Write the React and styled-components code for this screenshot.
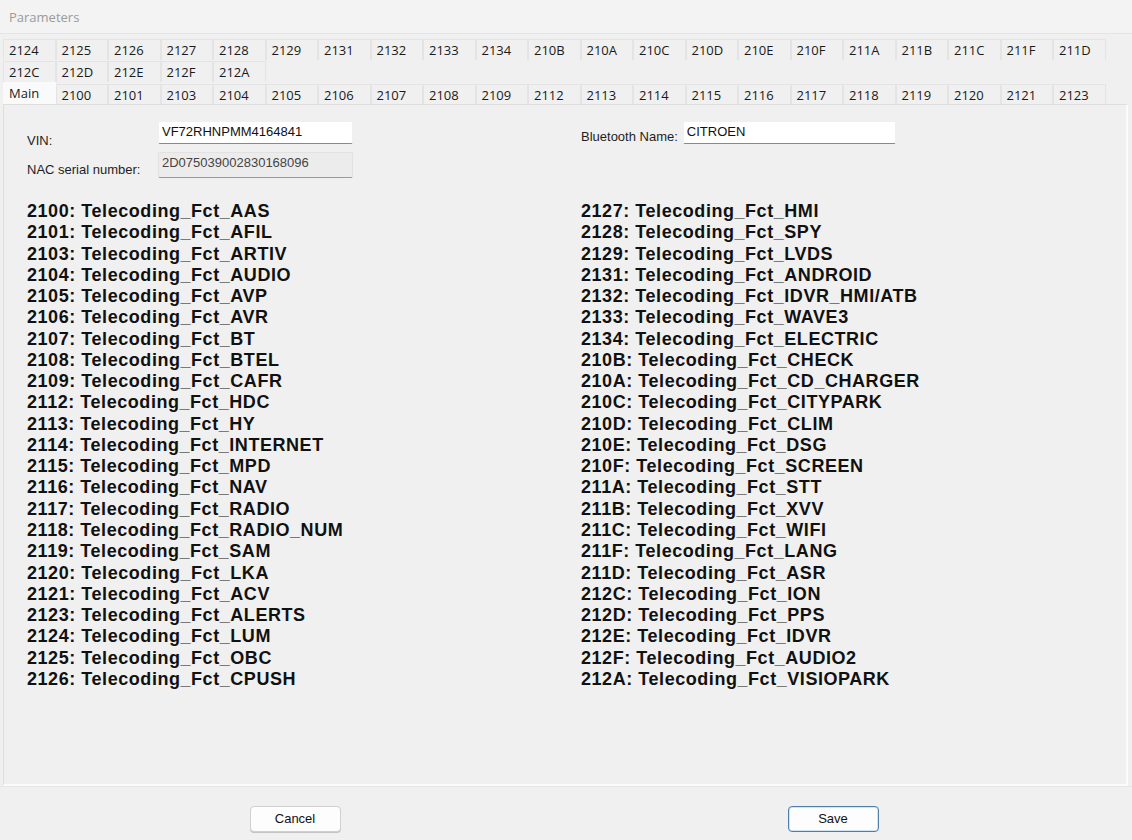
import React from "react";
import styled, { createGlobalStyle } from "styled-components";

const topRow = ["2124", "2125", "2126", "2127", "2128", "2129", "2131", "2132", "2133", "2134", "210B", "210A", "210C", "210D", "210E", "210F", "211A", "211B", "211C", "211F", "211D"];
const midRow = ["212C", "212D", "212E", "212F", "212A"];
const bottomRow = ["Main", "2100", "2101", "2103", "2104", "2105", "2106", "2107", "2108", "2109", "2112", "2113", "2114", "2115", "2116", "2117", "2118", "2119", "2120", "2121", "2123"];

const leftList = [
  ["2100", "AAS"], ["2101", "AFIL"], ["2103", "ARTIV"], ["2104", "AUDIO"], ["2105", "AVP"],
  ["2106", "AVR"], ["2107", "BT"], ["2108", "BTEL"], ["2109", "CAFR"], ["2112", "HDC"],
  ["2113", "HY"], ["2114", "INTERNET"], ["2115", "MPD"], ["2116", "NAV"], ["2117", "RADIO"],
  ["2118", "RADIO_NUM"], ["2119", "SAM"], ["2120", "LKA"], ["2121", "ACV"], ["2123", "ALERTS"],
  ["2124", "LUM"], ["2125", "OBC"], ["2126", "CPUSH"],
];

const rightList = [
  ["2127", "HMI"], ["2128", "SPY"], ["2129", "LVDS"], ["2131", "ANDROID"], ["2132", "IDVR_HMI/ATB"],
  ["2133", "WAVE3"], ["2134", "ELECTRIC"], ["210B", "CHECK"], ["210A", "CD_CHARGER"], ["210C", "CITYPARK"],
  ["210D", "CLIM"], ["210E", "DSG"], ["210F", "SCREEN"], ["211A", "STT"], ["211B", "XVV"],
  ["211C", "WIFI"], ["211F", "LANG"], ["211D", "ASR"], ["212C", "ION"], ["212D", "PPS"],
  ["212E", "IDVR"], ["212F", "AUDIO2"], ["212A", "VISIOPARK"],
];

export default function App() {
  return (
    <>
      <GlobalStyle />
      <Window>
        <TitleBar>Parameters</TitleBar>
        <TabControl>
          <TabRow>
            {topRow.map((t) => (
              <Tab key={t}>{t}</Tab>
            ))}
          </TabRow>
          <TabRow>
            {midRow.map((t) => (
              <Tab key={t}>{t}</Tab>
            ))}
          </TabRow>
          <TabRow $front>
            {bottomRow.map((t) => (
              <Tab key={t} $active={t === "Main"}>
                {t}
              </Tab>
            ))}
          </TabRow>
          <Panel>
            <Columns>
              <Column>
                <Field>
                  <Label $shift={-5}>VIN:</Label>
                  <Input value="VF72RHNPMM4164841" readOnly />
                </Field>
                <Field>
                  <Label $shift={0}>NAC serial number:</Label>
                  <Input $disabled value="2D075039002830168096" readOnly />
                </Field>
              </Column>
              <Column>
                <Field>
                  <Label $inline $shift={-1}>Bluetooth Name:</Label>
                  <Input $wide value="CITROEN" readOnly />
                </Field>
              </Column>
            </Columns>
            <Columns>
              <List>
                {leftList.map(([code, name]) => (
                  <Item key={code}>
                    {code}: Telecoding_Fct_{name}
                  </Item>
                ))}
              </List>
              <List>
                {rightList.map(([code, name]) => (
                  <Item key={code}>
                    {code}: Telecoding_Fct_{name}
                  </Item>
                ))}
              </List>
            </Columns>
          </Panel>
        </TabControl>
        <Footer>
          <Button>Cancel</Button>
          <Button $primary>Save</Button>
        </Footer>
      </Window>
    </>
  );
}

const GlobalStyle = createGlobalStyle`
  body {
    margin: 0;
    background: #f0f0f0;
    font-family: "Liberation Sans", Arial, sans-serif;
  }
`;

const Window = styled.div`
  width: 1132px;
  height: 840px;
  display: flex;
  flex-direction: column;
  background: #f0f0f0;
  overflow: hidden;
`;

const TitleBar = styled.div`
  height: 33px;
  display: flex;
  align-items: center;
  padding-left: 9px;
  font-family: "Open Sans", "Noto Sans", sans-serif;
  font-size: 13px;
  color: #9a9a9a;
  background: #f3f3f3;
  border-bottom: 1px solid #e4e4e4;
`;

const TabControl = styled.div`
  display: flex;
  flex-direction: column;
  margin: 4px 4px 0 3px;
`;

const TabRow = styled.div`
  display: flex;
  height: ${(p) => (p.$front ? "23px" : "22px")};
  align-items: flex-end;
`;

const Tab = styled.div`
  width: 52.5px;
  box-sizing: border-box;
  height: ${(p) => (p.$active ? "23px" : "21px")};
  display: flex;
  align-items: center;
  padding-left: 5px;
  padding-bottom: ${(p) => (p.$active ? "3px" : "0")};
  font-family: "Open Sans", "Noto Sans", sans-serif;
  font-size: 13px;
  color: #1a1a1a;
  background: ${(p) => (p.$active ? "#fafafa" : "#f0f0f0")};
  border: 1px solid ${(p) => (p.$active ? "#fafafa" : "#e4e4e4")};
  border-bottom: none;
`;

const Panel = styled.div`
  box-sizing: border-box;
  height: 682px;
  margin-top: -1px;
  padding: 16px 20px 0 23px;
  background: #f0f0f0;
  border: 1px solid #dedede;
  border-bottom: 2px solid #fbfbfb;
  border-right: 2px solid #fbfbfb;
`;

const Columns = styled.div`
  display: grid;
  grid-template-columns: 554px 1fr;
`;

const Column = styled.div`
  display: flex;
  flex-direction: column;
  gap: 8px;
`;

const Field = styled.div`
  display: flex;
  align-items: flex-end;
`;

const Label = styled.span`
  width: ${(p) => (p.$inline ? "auto" : "131px")};
  margin-right: ${(p) => (p.$inline ? "5px" : "0")};
  margin-bottom: ${(p) => p.$shift}px;
  font-size: 13px;
  line-height: 16px;
  color: #1e1e1e;
  white-space: nowrap;
`;

const Input = styled.input`
  width: ${(p) => (p.$wide ? "213px" : "195px")};
  height: ${(p) => (p.$disabled ? "26px" : "23px")};
  box-sizing: border-box;
  padding: ${(p) => (p.$disabled ? "0 0 6px 3px" : "0 0 3px 3px")};
  font-family: "Liberation Sans", Arial, sans-serif;
  font-size: 13px;
  color: ${(p) => (p.$disabled ? "#444" : "#111")};
  background: ${(p) => (p.$disabled ? "#ececec" : "#ffffff")};
  border: 1px solid ${(p) => (p.$disabled ? "#e2e2e2" : "#f0f0f0")};
  border-bottom: 1px solid ${(p) => (p.$disabled ? "#9a9a9a" : "#8a8a8a")};
  border-radius: 2px;
  outline: none;
`;

const List = styled.div`
  display: flex;
  flex-direction: column;
  padding-top: 23px;
`;

const Item = styled.div`
  font-family: "Liberation Sans", Arial, sans-serif;
  font-weight: bold;
  font-size: 18px;
  letter-spacing: 0.55px;
  line-height: 21.27px;
  color: #111;
  white-space: nowrap;
`;

const Footer = styled.div`
  flex: 1;
  display: grid;
  grid-template-columns: 1fr 1fr;
  align-items: center;
  justify-items: center;
  padding: 10px 30px 0 26px;
  border-top: 1px solid #e6e6e6;
`;

const Button = styled.button`
  width: 91px;
  height: 26px;
  box-sizing: border-box;
  font-family: "Liberation Sans", Arial, sans-serif;
  font-size: 13px;
  color: #111;
  background: #fdfdfd;
  border: 1px solid ${(p) => (p.$primary ? "#4f7ea8" : "#d0d0d0")};
  border-radius: 4px;
  box-shadow: ${(p) => (p.$primary ? "inset 0 0 0 1px #cfe3f3" : "0 1px 0 #c4c4c4")};
`;
